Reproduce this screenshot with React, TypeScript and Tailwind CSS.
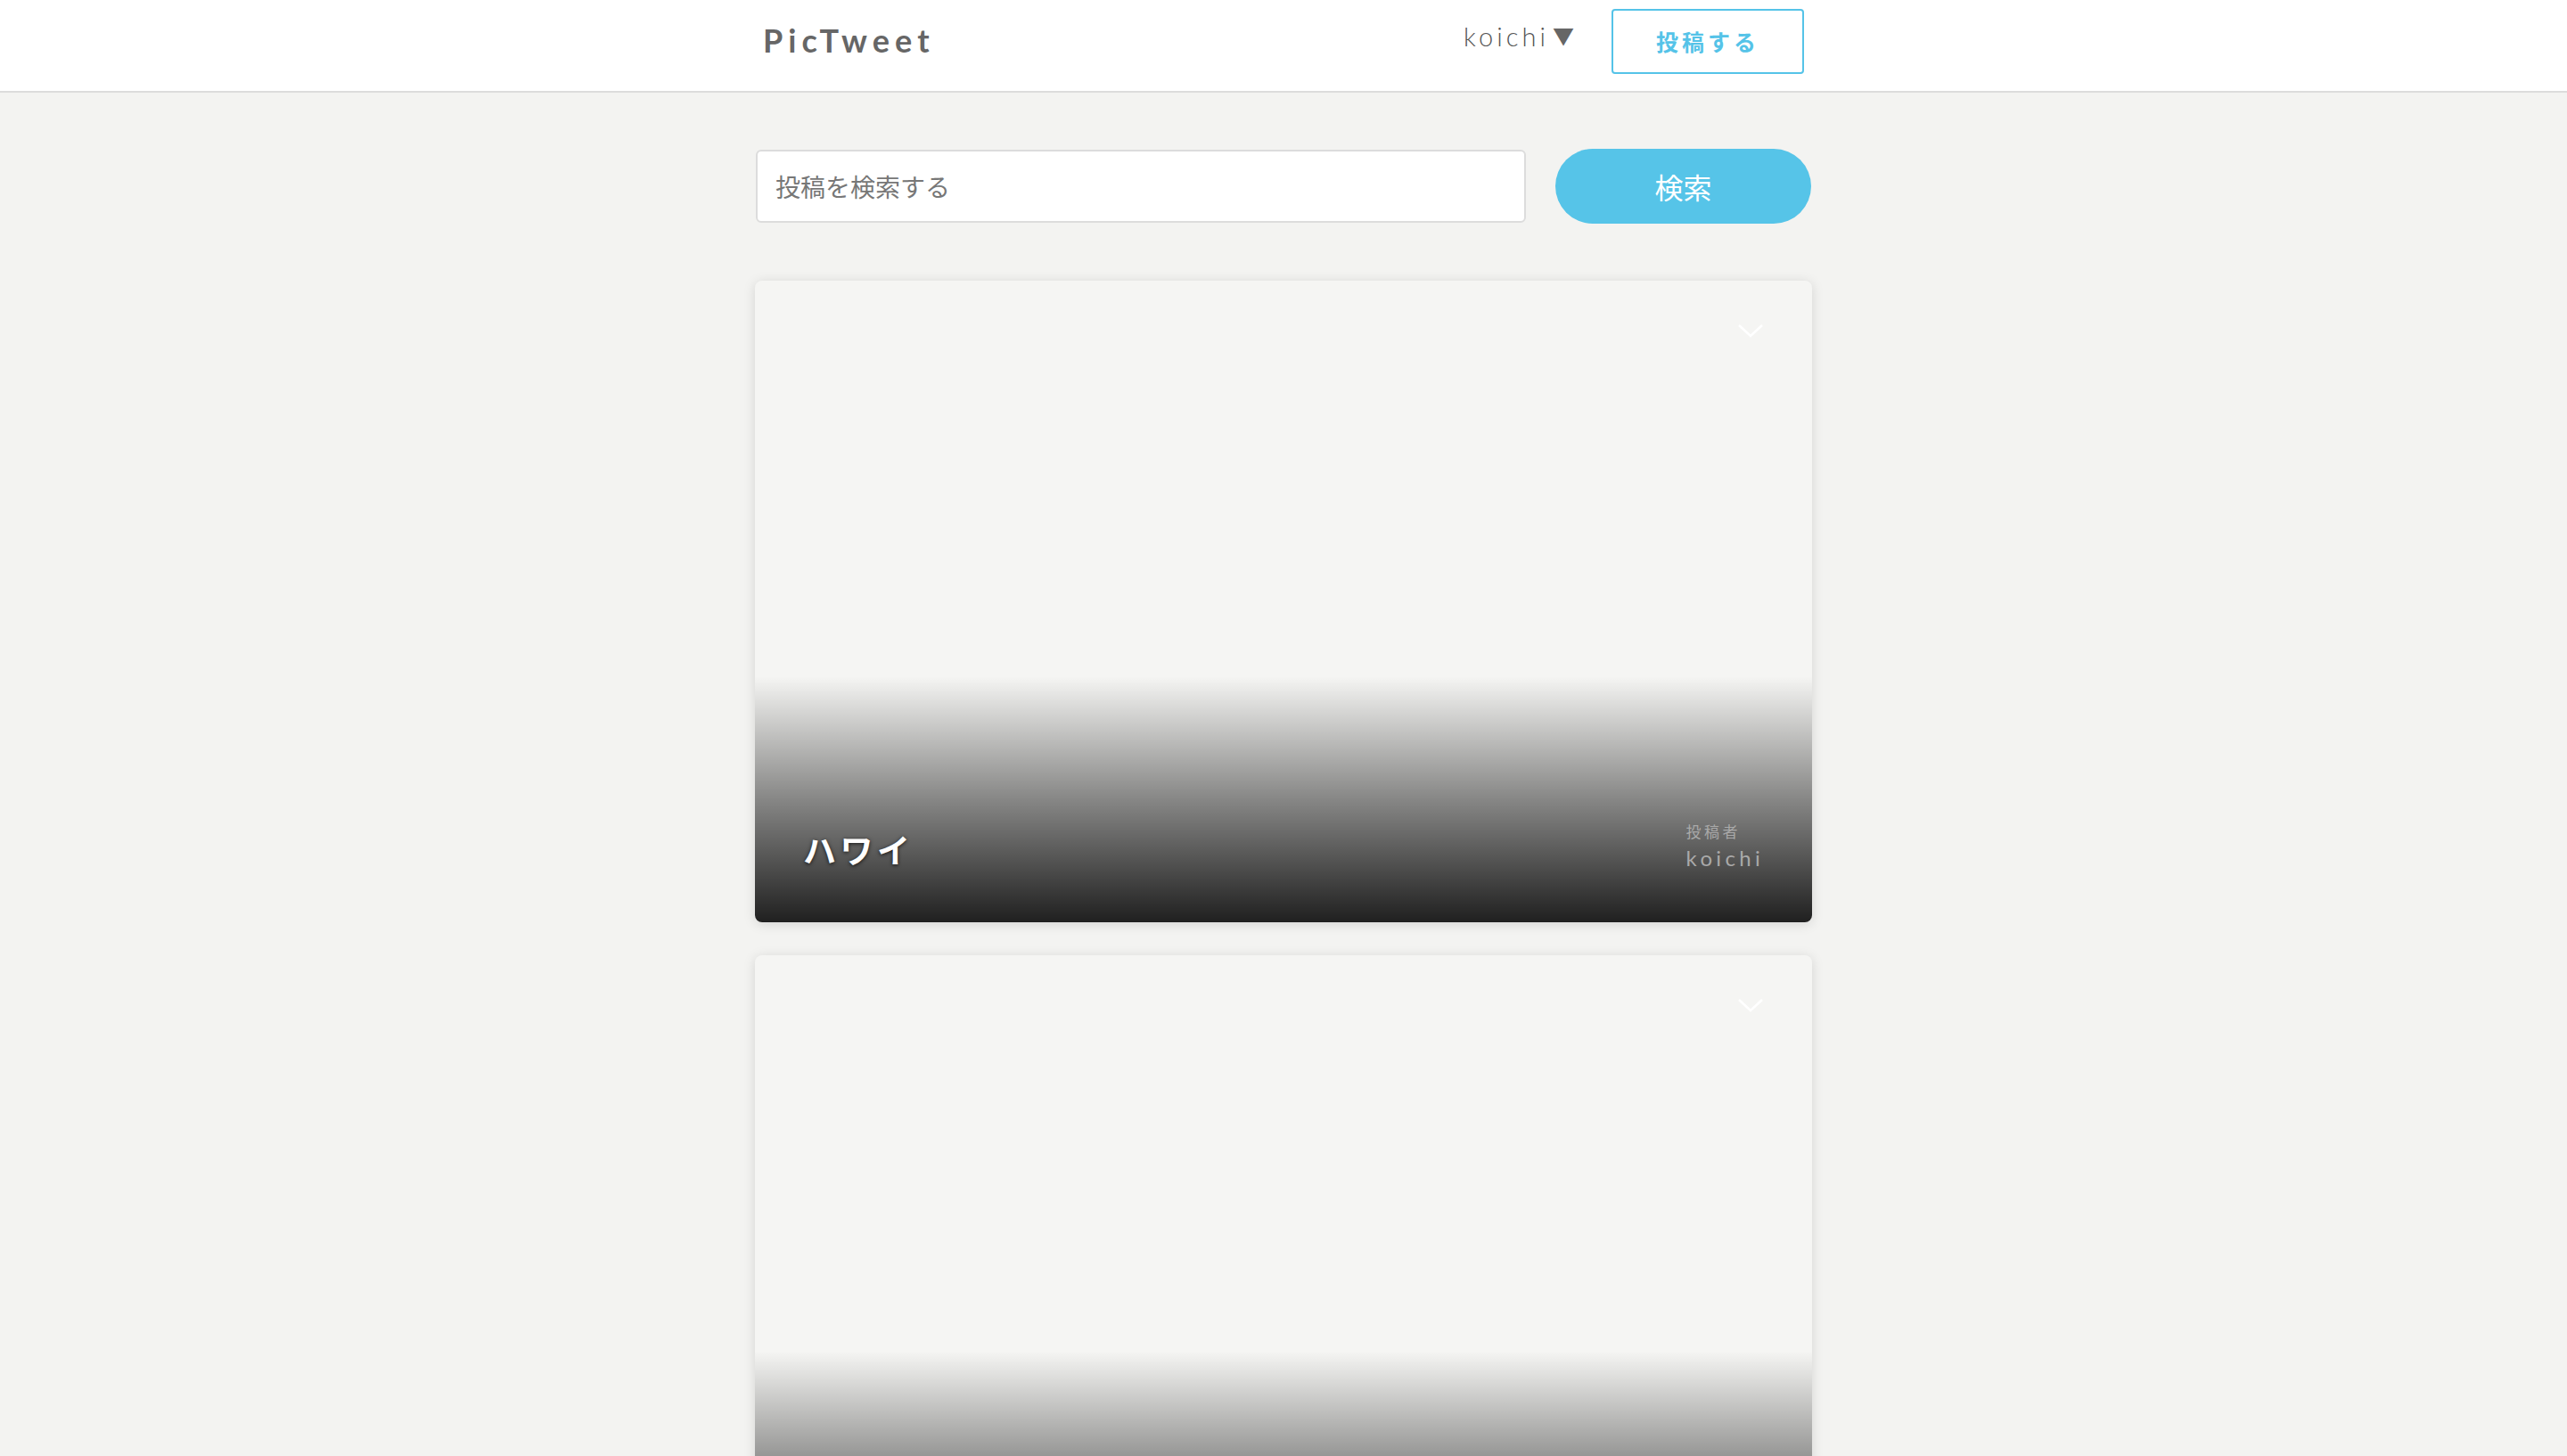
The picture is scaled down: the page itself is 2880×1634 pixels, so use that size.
import React from "react";

const posts = [
  { id: 1, text: "ハワイ", user: "koichi" },
  { id: 2, text: "", user: "koichi" },
];

function Chevron() {
  return (
    <svg width="30" height="18" viewBox="0 0 30 18" fill="none">
      <polyline points="2,3 15,15 28,3" stroke="#ffffff" strokeWidth="2.5" />
    </svg>
  );
}

function PostCard({ text, user }: { text: string; user: string }) {
  return (
    <div className="relative h-[720px] w-full overflow-hidden rounded-[8px] bg-[#f5f5f3] shadow-[0_2px_14px_rgba(0,0,0,0.13)]">
      <div className="absolute right-[54px] top-[47px]">
        <Chevron />
      </div>
      <div className="absolute inset-x-0 bottom-0 flex h-[276px] items-end justify-between bg-gradient-to-b from-[rgba(0,0,0,0)] via-[rgba(0,0,0,0.45)] to-[rgba(0,0,0,0.87)] pb-[54px] pl-[54px] pr-[54px]">
        <p
          className="text-[37px] font-bold tracking-[0.12em] text-white [text-shadow:0_1px_4px_rgba(0,0,0,0.8)]"
          style={{ fontFamily: '"Noto Sans CJK JP", sans-serif' }}
        >
          {text}
        </p>
        <div className="flex flex-col text-[#a9a9a9]">
          <span className="text-[17px] tracking-[0.2em]" style={{ fontFamily: '"Noto Sans CJK JP", sans-serif' }}>
            投稿者
          </span>
          <span className="text-[24px] tracking-[0.18em]" style={{ fontFamily: "Lato, sans-serif" }}>
            {user}
          </span>
        </div>
      </div>
    </div>
  );
}

export default function App() {
  return (
    <div
      className="min-h-screen bg-[#f3f3f1]"
      style={{ fontFamily: 'Lato, "Noto Sans CJK JP", sans-serif' }}
    >
      <header className="h-[104px] border-b-2 border-[#dcdcdc] bg-white">
        <div className="mx-auto flex h-full w-[1186px] items-start justify-between pl-[9px] pr-[9px]">
          <h1 className="mt-[18px] text-[36px] font-bold tracking-[0.17em] text-[#666666]">PicTweet</h1>
          <div className="flex items-start">
            <span className="mt-[19px] flex items-center text-[29px] font-light tracking-[0.14em] text-[#555555]">
              koichi
              <span className="ml-[4px] text-[24px] text-[#666666]">▼</span>
            </span>
            <button
              className="ml-[38px] mt-[10px] h-[73px] w-[216px] rounded-[4px] border-2 border-[#55c3e8] bg-white text-[25px] font-bold tracking-[0.16em] text-[#55c3e8]"
              style={{ fontFamily: '"Noto Sans CJK JP", sans-serif' }}
            >
              投稿する
            </button>
          </div>
        </div>
      </header>

      <main className="mx-auto w-[1186px] pt-[63px]">
        <div className="flex items-center">
          <input
            placeholder="投稿を検索する"
            className="ml-[1px] h-[82px] w-[864px] rounded-[6px] border-2 border-[#dcdcdc] bg-white px-[20px] text-[28px] text-[#555] outline-none placeholder:text-[#777777]"
            style={{ fontFamily: '"Noto Sans CJK JP", sans-serif' }}
          />
          <button
            className="ml-[33px] h-[84px] w-[287px] rounded-full bg-[#56c4e8] text-[32px] text-white"
            style={{ fontFamily: '"Noto Sans CJK JP", sans-serif' }}
          >
            検索
          </button>
        </div>

        <div className="mt-[64px] flex flex-col gap-[37px] pb-[40px]">
          {posts.map((p) => (
            <PostCard key={p.id} text={p.text} user={p.user} />
          ))}
        </div>
      </main>
    </div>
  );
}
